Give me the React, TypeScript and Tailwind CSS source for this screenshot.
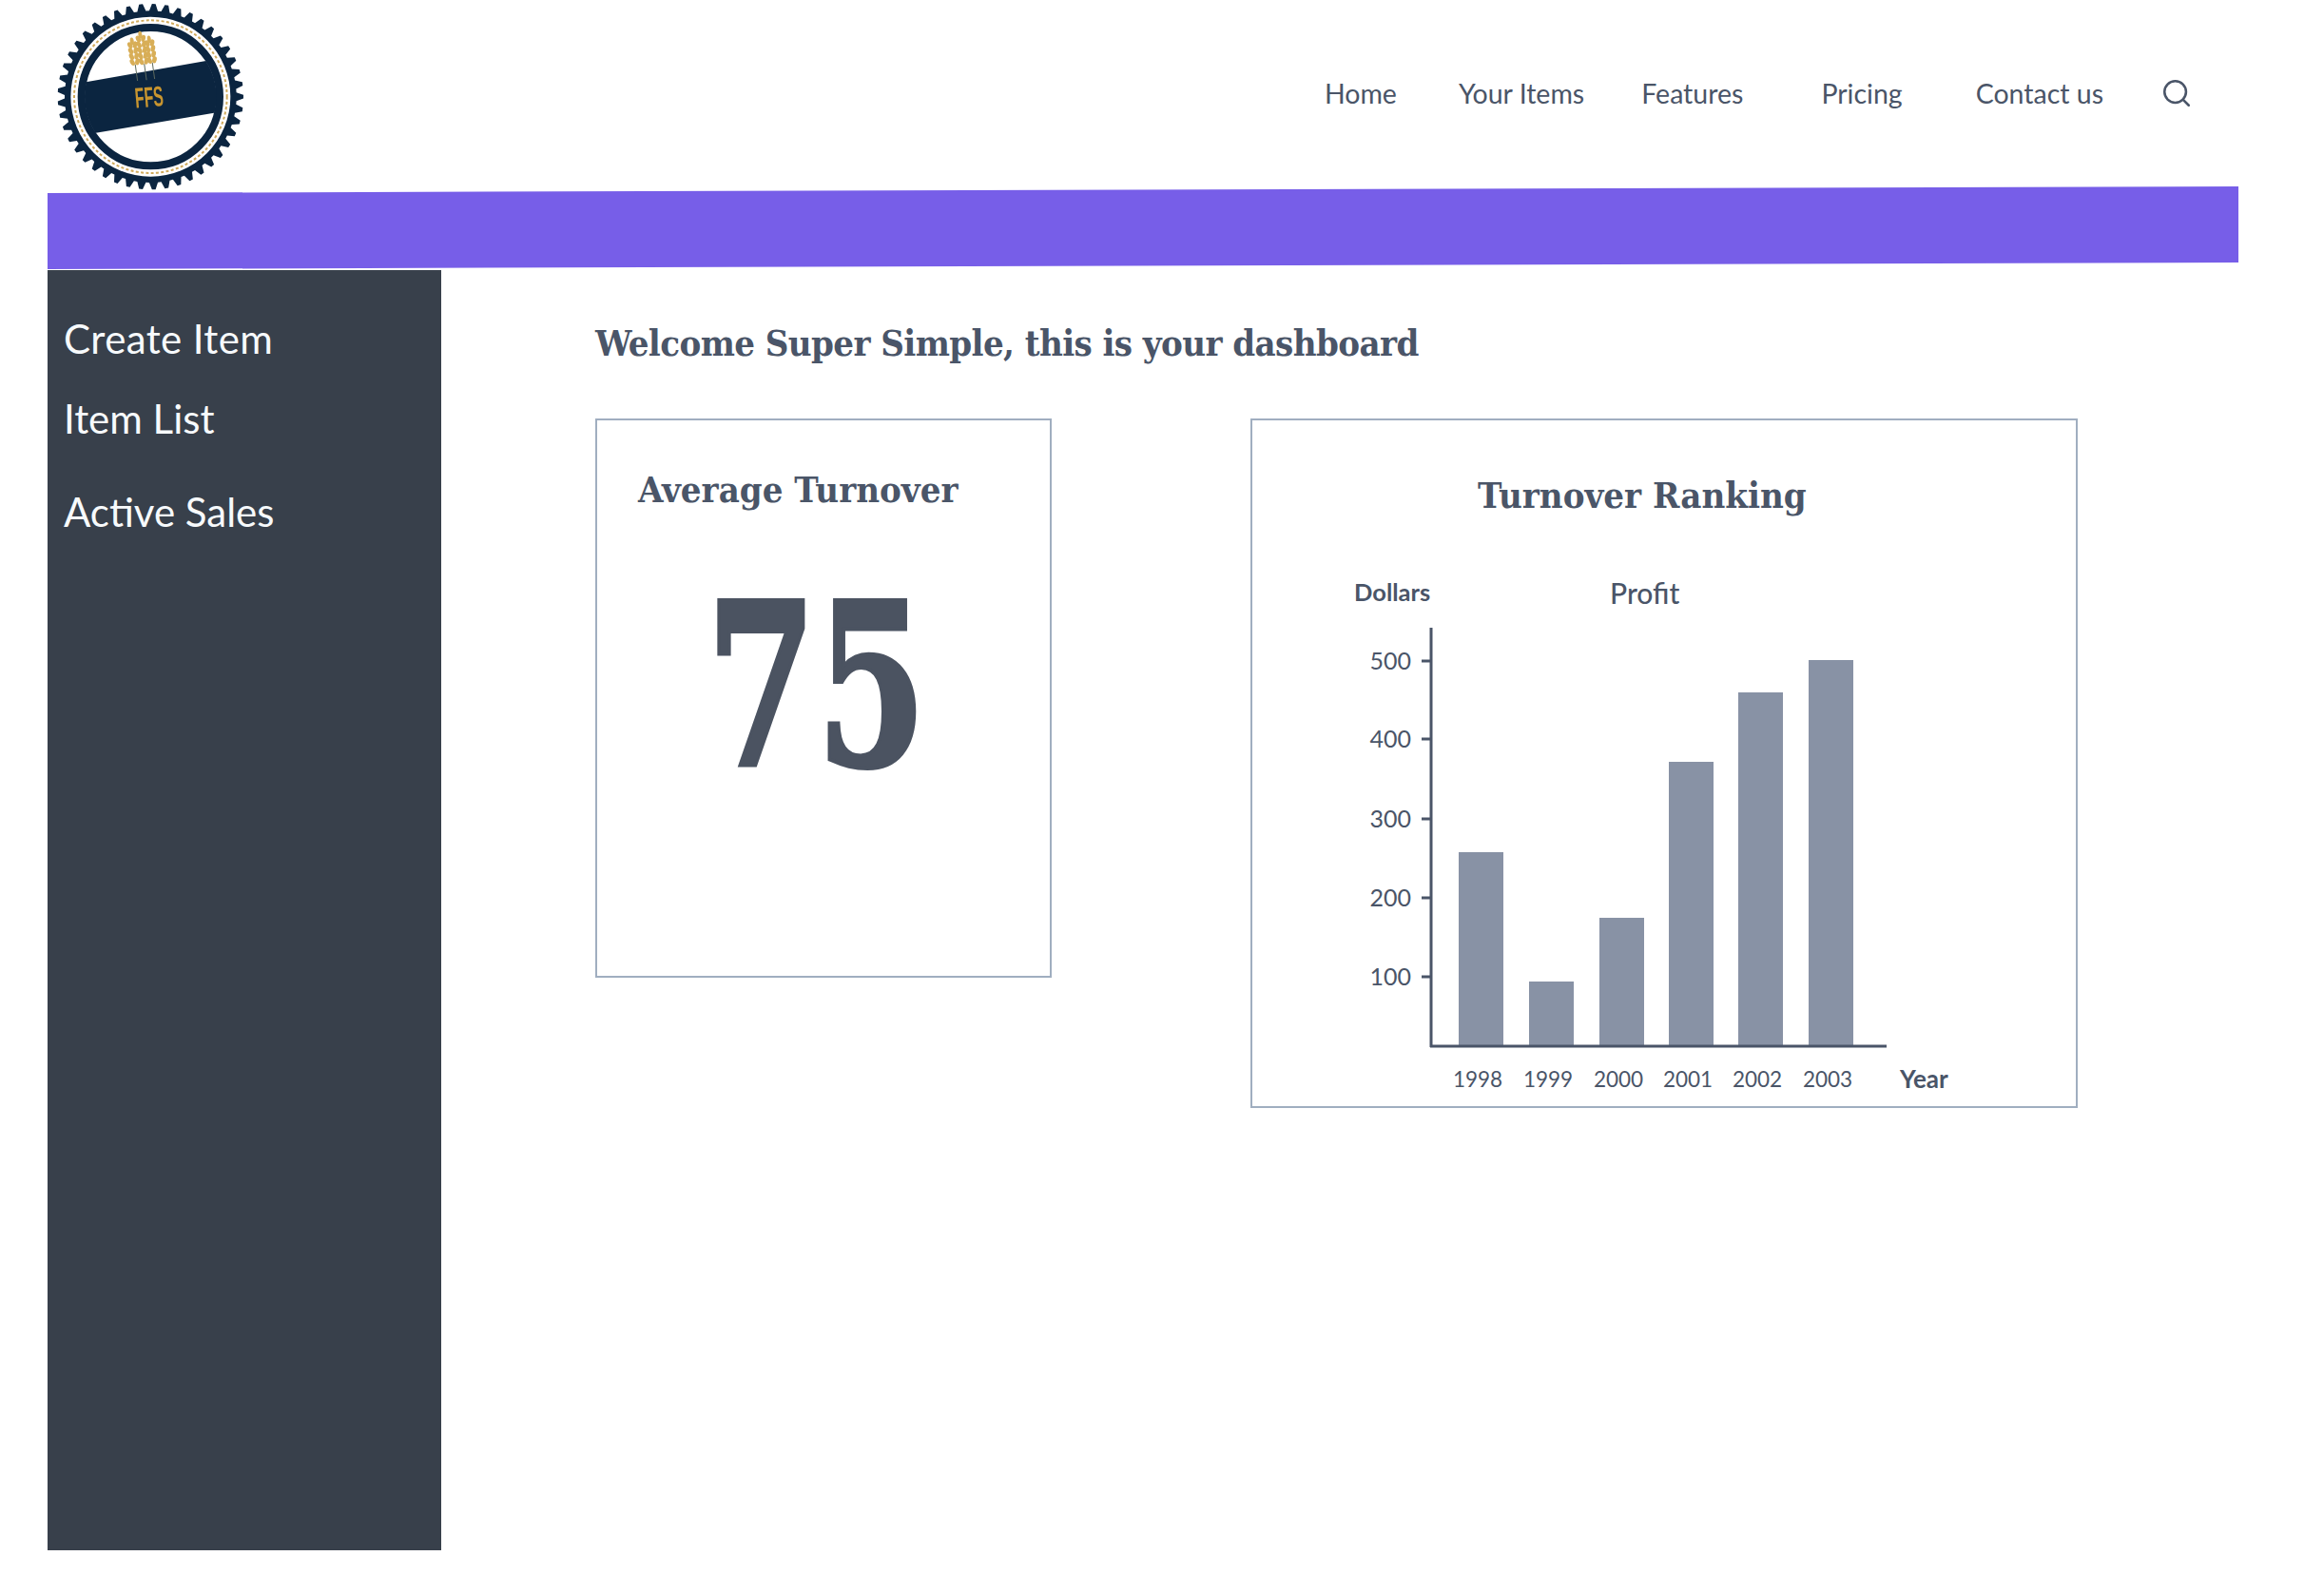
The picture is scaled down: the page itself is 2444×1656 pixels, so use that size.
import { Search } from "lucide-react";

const sans = "font-['Lato','Liberation_Sans',sans-serif]";
const slab = "font-['DejaVu_Serif_Condensed','DejaVu_Serif',serif]";

function gearPoints() {
  const teeth = 45;
  const pts: string[] = [];
  for (let i = 0; i < teeth; i++) {
    const step = (Math.PI * 2) / teeth;
    const a = i * step;
    [
      [a - step * 0.14, 293],
      [a + step * 0.14, 293],
      [a + step * 0.36, 271],
      [a + step * 0.64, 271],
    ].forEach(([t, r]) => pts.push(`${(355 + r * Math.cos(t)).toFixed(1)},${(305 + r * Math.sin(t)).toFixed(1)}`));
  }
  return pts.join(" ");
}

function Stalk({ x, y, rows }: { x: number; y: number; rows: number }) {
  const list = Array.from({ length: rows }, (_, i) => i);
  const end = y + rows * 18;
  return (
    <g transform={`rotate(-8 ${x} ${y})`}>
      <line x1={x} y1={end - 10} x2={x} y2={end + 42} stroke="#5d6a5e" strokeWidth="3" />
      <ellipse cx={x} cy={y - 12} rx="6" ry="12" fill="#d8ae57" />
      {list.map((r) => (
        <g key={r}>
          <ellipse cx={x - 8} cy={y + r * 18} rx="7" ry="11" fill="#d8ae57" transform={`rotate(-20 ${x - 8} ${y + r * 18})`} />
          <ellipse cx={x + 8} cy={y + r * 18} rx="7" ry="11" fill="#d8ae57" transform={`rotate(20 ${x + 8} ${y + r * 18})`} />
        </g>
      ))}
    </g>
  );
}

function Logo() {
  return (
    <svg viewBox="0 0 720 588" className="ml-[-10px] h-[196px] w-[240px] overflow-visible blur-[0.6px]">
      <defs>
        <clipPath id="inner">
          <circle cx="355" cy="305" r="208" />
        </clipPath>
      </defs>
      <polygon points={gearPoints()} fill="#0b2540" />
      <circle cx="355" cy="305" r="252" fill="#ffffff" />
      <circle cx="355" cy="305" r="241" fill="none" stroke="#d0aa5c" strokeWidth="6" strokeDasharray="9 7" />
      <circle cx="355" cy="305" r="218" fill="none" stroke="#0b2540" strokeWidth="24" />
      <polygon points="100,268 600,180 620,345 120,430" fill="#0b2540" clipPath="url(#inner)" />
      <Stalk x={298} y={142} rows={4} />
      <Stalk x={352} y={136} rows={4} />
      <Stalk x={324} y={122} rows={5} />
      <text
        x="305"
        y="337"
        fontSize="90"
        fontWeight="700"
        fill="#c8952f"
        fontFamily="Liberation Sans Narrow, Liberation Sans, sans-serif"
        textLength="90"
        lengthAdjust="spacingAndGlyphs"
        transform="rotate(-5 350 300)"
      >
        FFS
      </text>
    </svg>
  );
}

const bars = [
  { x: 1534, top: 895, year: "1998" },
  { x: 1608, top: 1031, year: "1999" },
  { x: 1682, top: 964, year: "2000" },
  { x: 1755, top: 800, year: "2001" },
  { x: 1828, top: 727, year: "2002" },
  { x: 1902, top: 693, year: "2003" },
];
const ticks = [
  { y: 694, label: "500" },
  { y: 776, label: "400" },
  { y: 860, label: "300" },
  { y: 943, label: "200" },
  { y: 1026, label: "100" },
];

function Chart() {
  return (
    <svg viewBox="1317 590 866 570" className="h-[570px] w-[866px]" fontFamily="Lato, sans-serif" fill="#4a5568">
      <text x="1424" y="631" fontSize="25.5" fontWeight="700">Dollars</text>
      <text x="1693" y="634" fontSize="30" fontWeight="500">Profit</text>
      {ticks.map((t) => (
        <g key={t.y}>
          <text x="1484" y={t.y + 9} fontSize="25" textAnchor="end">{t.label}</text>
          <line x1="1495" x2="1506" y1={t.y} y2={t.y} stroke="#4a5568" strokeWidth="3" />
        </g>
      ))}
      {bars.map((b) => (
        <g key={b.year}>
          <rect x={b.x} y={b.top} width="47" height={1098 - b.top} fill="#8892a5" />
          <text x={b.x + 20} y="1142" fontSize="22.5" textAnchor="middle">{b.year}</text>
        </g>
      ))}
      <line x1="1505" x2="1505" y1="659" y2="1100" stroke="#4a5568" strokeWidth="3" />
      <line x1="1504" x2="1984" y1="1099" y2="1099" stroke="#4a5568" strokeWidth="3" />
      <text x="1998" y="1143" fontSize="26" fontWeight="700">Year</text>
    </svg>
  );
}

const navItems = [
  { label: "Home", cls: "ml-0" },
  { label: "Your Items", cls: "ml-[65px]" },
  { label: "Features", cls: "ml-[60px]" },
  { label: "Pricing", cls: "ml-[82px]" },
  { label: "Contact us", cls: "ml-[77px]" },
];

export default function App() {
  return (
    <div className={`${sans} min-h-[1656px] bg-white pl-[50px] text-[#4a5568]`}>
      <header className="flex h-[196px] w-[2304px] items-center justify-between">
        <Logo />
        <nav className="mr-[48px] flex items-center text-[28.5px]">
          {navItems.map((n) => (
            <a key={n.label} className={n.cls}>{n.label}</a>
          ))}
          <Search className="ml-[60px]" size={34} strokeWidth={1.8} />
        </nav>
      </header>
      <div className="h-[87px] w-[2304px] bg-[#775ee8] [clip-path:polygon(0_7px,100%_0,100%_80px,0_87px)]" />
      <div className="mt-px flex">
        <aside className="flex h-[1346px] w-[414px] flex-col bg-[#38404b] pl-[17px] pt-[42px] text-[42px] leading-[60px] text-[#f7fafc]">
          <a className="tracking-[0.4px]">Create Item</a>
          <a className="mt-[24px]">Item List</a>
          <a className="mt-[38px]">Active Sales</a>
        </aside>
        <main className="pl-[162px]">
          <h1 className={`${slab} mt-[51px] h-[52px] text-[38px] font-bold leading-[52px] tracking-[-0.6px]`}>
            Welcome Super Simple, this is your dashboard
          </h1>
          <div className="mt-[53px] flex items-start">
            <section className="h-[588px] w-[480px] border-2 border-[#a0aec0] pl-[43px] pt-[46px]">
              <h2 className={`${slab} text-[38px] font-bold leading-[54px]`}>Average Turnover</h2>
              <div className={`${slab} mt-[50px] origin-left scale-x-[0.78] pl-[92px] text-[237px] font-bold leading-[260px] text-[#4b5361] [-webkit-text-stroke:4px_#4b5361]`}>75</div>
            </section>
            <section className="ml-[209px] h-[725px] w-[870px] border-2 border-[#a0aec0]">
              <h2 className={`${slab} pl-[237px] pt-[52px] text-[38px] font-bold leading-[54px]`}>Turnover Ranking</h2>
              <div className="mt-[43px]">
                <Chart />
              </div>
            </section>
          </div>
        </main>
      </div>
    </div>
  );
}
